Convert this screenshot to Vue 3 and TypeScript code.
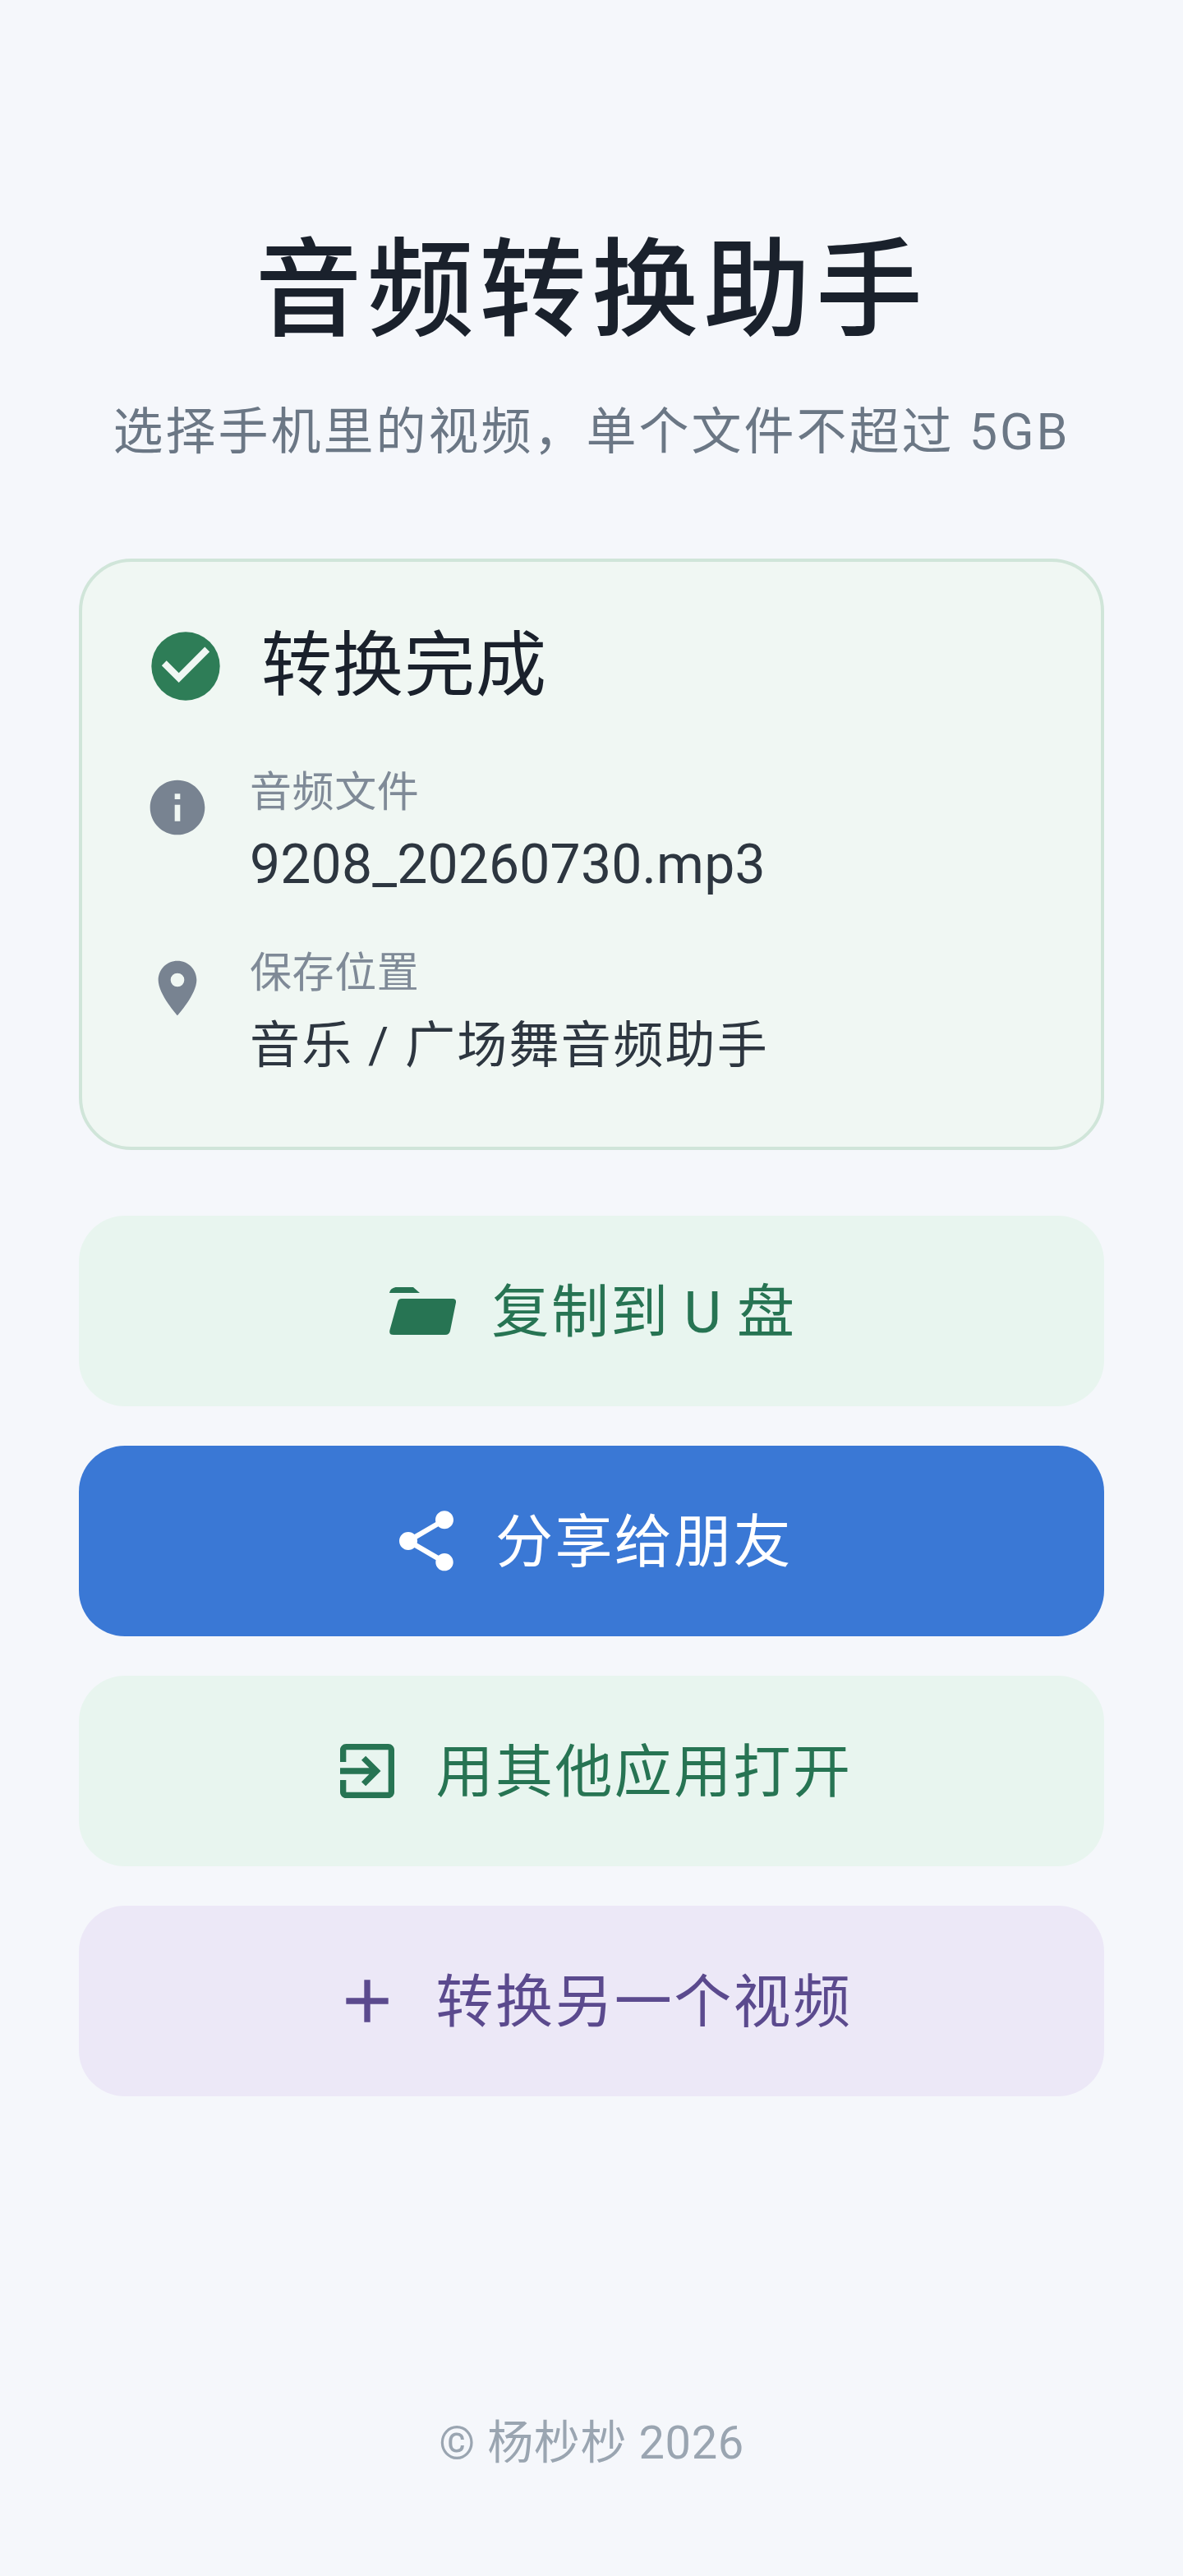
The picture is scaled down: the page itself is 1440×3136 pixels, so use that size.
<script setup lang="ts">
const details = [
  { label: '音频文件', value: '9208_20260730.mp3', kind: 'info', cls: 'file' },
  { label: '保存位置', value: '音乐 / 广场舞音频助手', kind: 'pin', cls: '' },
];
</script>

<template>
  <main class="page">
    <h1 class="title">音频转换助手</h1>
    <p class="subtitle">选择手机里的视频，单个文件不超过 5GB</p>

    <section class="card">
      <div class="status">
        <svg class="status-icon" viewBox="0 0 24 24"><path fill="#2e7d57" d="M12 2a10 10 0 1 0 0 20 10 10 0 0 0 0-20z"/><path fill="#f0f7f3" d="M10 17l-5-5 1.41-1.41L10 14.17l7.59-7.59L19 8l-9 9z" transform="translate(0 -.2)"/></svg>
        <span class="status-text">转换完成</span>
      </div>
      <div v-for="d in details" :key="d.label" class="detail">
        <svg v-if="d.kind === 'info'" class="detail-icon" viewBox="0 0 24 24"><path fill="#788391" d="M12 2C6.48 2 2 6.48 2 12s4.48 10 10 10 10-4.48 10-10S17.52 2 12 2zm1 15h-2v-6h2v6zm0-8h-2V7h2v2z"/></svg>
        <svg v-else class="detail-icon" viewBox="0 0 24 24"><path fill="#788391" d="M12 2C8.13 2 5 5.13 5 9c0 5.25 7 13 7 13s7-7.75 7-13c0-3.87-3.13-7-7-7zm0 9.5a2.5 2.5 0 0 1 0-5 2.5 2.5 0 0 1 0 5z"/></svg>
        <div class="detail-body">
          <div class="label">{{ d.label }}</div>
          <div class="value" :class="d.cls">{{ d.value }}</div>
        </div>
      </div>
    </section>

    <div class="actions">
      <button class="btn green">
        <svg class="btn-icon" viewBox="0 0 88 88"><path fill="currentColor" d="M3 22C4 17 8 15 12 15H32L40 22Z"/><path fill="currentColor" d="M18 29H80Q84.500 29 84 33.500L77 68Q76 73 71 73H8Q2 73 3.500 67L13 33Q14 29 18 29Z"/></svg>
        <span>复制到 U 盘</span>
      </button>
      <button class="btn blue">
        <svg class="btn-icon" viewBox="0 0 24 24"><path fill="currentColor" d="M18 16.080c-.76 0-1.440.3-1.960.77L8.910 12.700c.05-.23.09-.46.09-.7s-.04-.47-.09-.7l7.050-4.110c.54.5 1.250.81 2.040.81 1.660 0 3-1.340 3-3s-1.340-3-3-3-3 1.340-3 3c0 .24.04.47.09.7L8.040 9.810C7.500 9.310 6.790 9 6 9c-1.660 0-3 1.340-3 3s1.340 3 3 3c.79 0 1.500-.31 2.040-.81l7.120 4.160c-.05.21-.08.43-.08.65 0 1.610 1.310 2.920 2.920 2.920 1.610 0 2.920-1.310 2.920-2.920s-1.310-2.920-2.920-2.920z"/></svg>
        <span>分享给朋友</span>
      </button>
      <button class="btn green">
        <svg class="btn-icon" viewBox="0 0 24 24"><path fill="currentColor" d="M10.090 15.590L11.500 17l5-5-5-5-1.410 1.410L12.670 11H3v2h9.670l-2.580 2.590zM19 3H5c-1.110 0-2 .9-2 2v4h2V5h14v14H5v-4H3v4c0 1.100.89 2 2 2h14c1.100 0 2-.9 2-2V5c0-1.100-.9-2-2-2z"/></svg>
        <span>用其他应用打开</span>
      </button>
      <button class="btn purple">
        <svg class="btn-icon" viewBox="0 0 24 24"><path fill="currentColor" d="M19 13h-6v6h-2v-6H5v-2h6V5h2v6h6v2z"/></svg>
        <span>转换另一个视频</span>
      </button>
    </div>

    <footer class="footer">© 杨杪杪 2026</footer>
  </main>
</template>

<style>
body { margin: 0; background: #f5f7fb; }
</style>

<style scoped>
.page {
  box-sizing: border-box;
  height: 3136px;
  padding: 270px 96px 124px;
  display: flex;
  flex-direction: column;
  background: #f5f7fb;
  font-family: Roboto, "Noto Sans CJK SC", sans-serif;
}
.title {
  margin: 0;
  text-align: center;
  font-size: 130px;
  line-height: 168px;
  font-weight: 500;
  letter-spacing: 6.500px;
  color: #1a212c;
}
.subtitle {
  margin: 46px 0 0;
  text-align: center;
  font-size: 61px;
  line-height: 84px;
  letter-spacing: 3px;
  color: #6b7785;
}
.card {
  box-sizing: border-box;
  height: 720px;
  margin-top: 112px;
  padding: 77px 76px 0;
  border: 4px solid #d0e5d9;
  border-radius: 64px;
  background: #f0f7f3;
}
.status {
  display: flex;
  align-items: center;
  gap: 42px;
  height: 100px;
  margin-bottom: 68px;
}
.status-icon { width: 100px; height: 100px; flex: none; }
.status-text {
  font-size: 86px;
  line-height: 100px;
  letter-spacing: 1px;
  color: #1a212c;
}
.detail {
  display: flex;
  gap: 48px;
  margin-top: 52px;
}
.detail-icon { width: 80px; height: 80px; flex: none; margin-top: 14px; }
.label {
  font-size: 51px;
  line-height: 72px;
  letter-spacing: 0.6px;
  color: #7f8a97;
}
.value {
  margin-top: 8px;
  font-size: 61px;
  line-height: 88px;
  letter-spacing: 2.3px;
  color: #2d3640;
}
.value.file {
  font-size: 66px;
  letter-spacing: 0.2px;
}
.actions {
  display: flex;
  flex-direction: column;
  gap: 48px;
  margin-top: 80px;
}
.btn {
  display: flex;
  align-items: center;
  justify-content: center;
  gap: 40px;
  height: 232px;
  border: 0;
  border-radius: 56px;
  font-family: inherit;
  font-size: 70px;
  letter-spacing: 2.400px;
  word-spacing: -3px;
}
.btn span { margin-bottom: 10px; }
.btn-icon { width: 88px; height: 88px; flex: none; }
.green { background: #e8f5ef; color: #277453; }
.blue { background: #3a78d5; color: #fff; }
.purple { background: #ece8f7; color: #5b4a8e; }
.footer {
  margin-top: auto;
  text-align: center;
  font-size: 56px;
  line-height: 76px;
  letter-spacing: 0.6px;
  color: #9aa5b1;
}
</style>
